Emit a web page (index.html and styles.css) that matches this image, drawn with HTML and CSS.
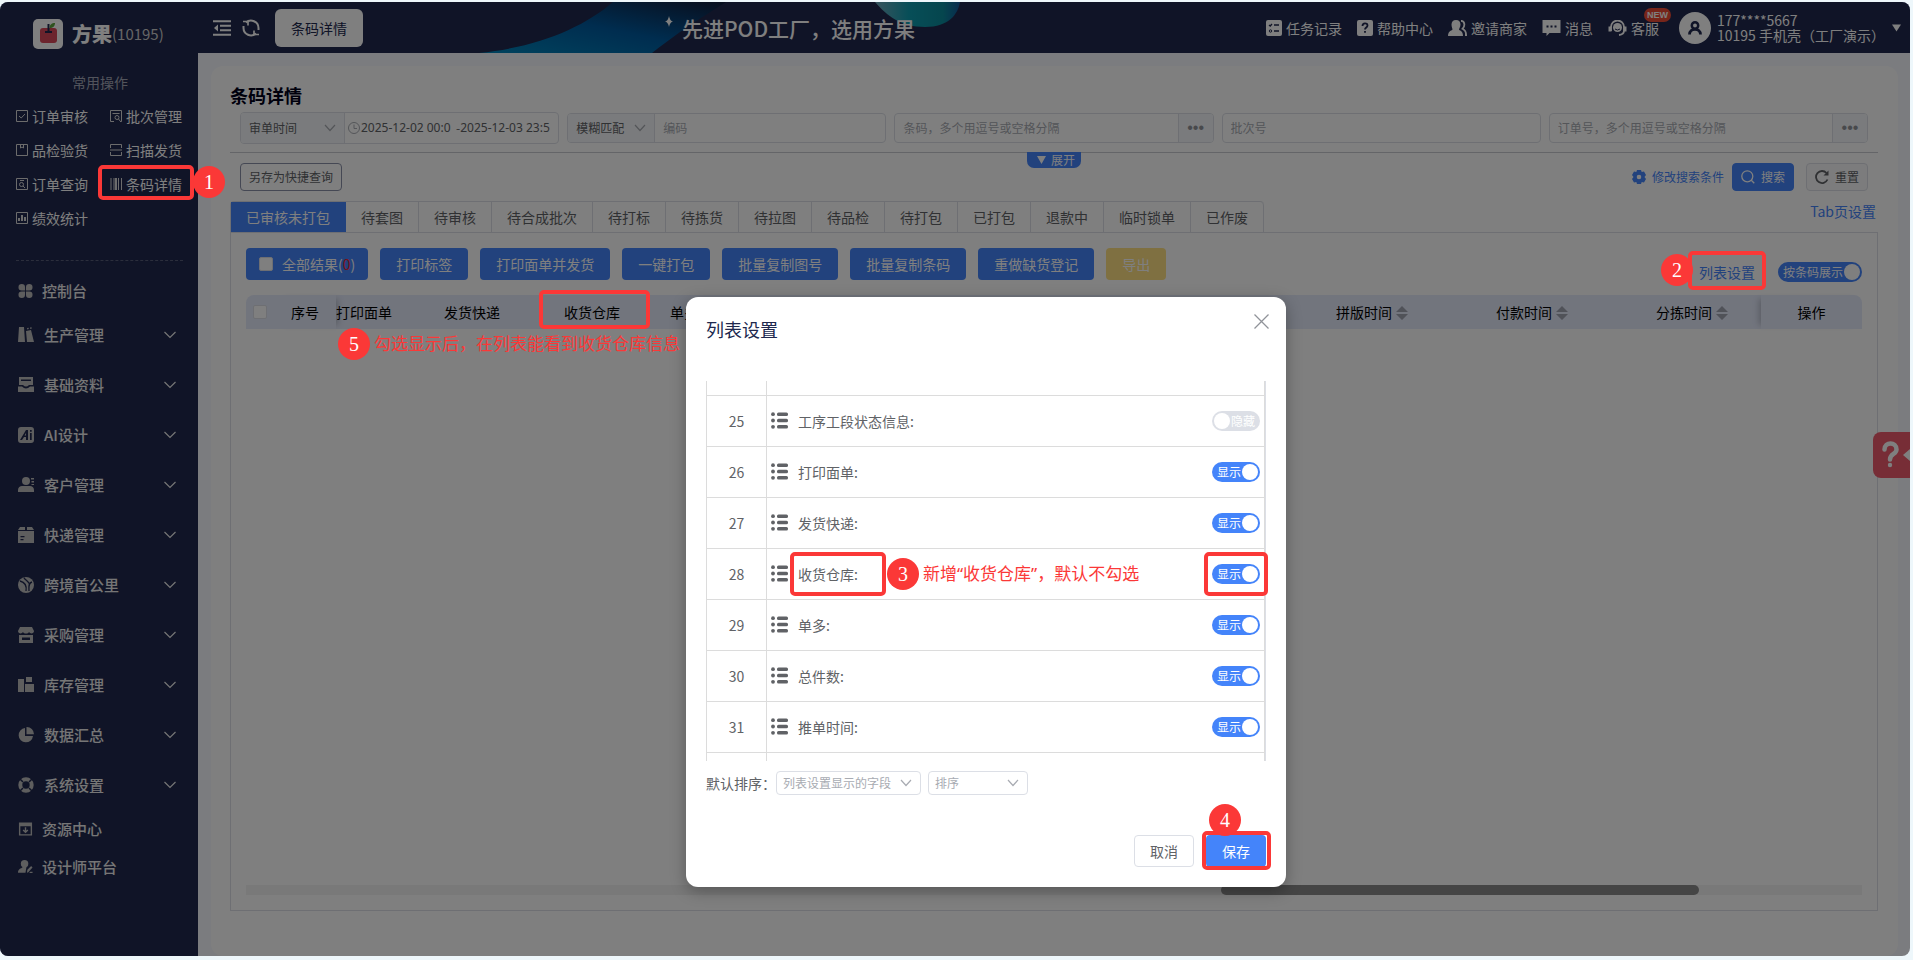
FILE: index.html
```html
<!DOCTYPE html>
<html lang="zh-CN">
<head>
  <meta charset="UTF-8">
  <meta name="viewport" content="width=device-width, initial-scale=1.0">
  <title>条码详情</title>
  <link rel="stylesheet" href="styles.css">
</head>
<body>

<!-- shared icons -->
<svg class="sprite" aria-hidden="true">
  <symbol id="down" viewBox="0 0 12 8"><path d="M0.5 1l5.500 5.500L11.500 1" fill="none" stroke="currentColor" stroke-width="1.2"/></symbol>
  <symbol id="sort" viewBox="0 0 12 14"><path d="M6 0l6 6H0zM6 14l6-6H0z" fill="currentColor"/></symbol>
  <symbol id="rows" viewBox="0 0 17 17"><g fill="currentColor"><circle cx="2" cy="2.200" r="1.900"/><circle cx="2" cy="8.500" r="1.900"/><circle cx="2" cy="14.800" r="1.900"/><rect x="6" y="0.500" width="11" height="3.600" rx="1.500"/><rect x="6" y="6.700" width="11" height="3.600" rx="1.500"/><rect x="6" y="12.900" width="11" height="3.600" rx="1.500"/></g></symbol>
</svg>

<div class="window">
  <aside class="sidebar">
    <div class="brand">
      <svg class="logo" viewBox="0 0 30 30"><rect width="30" height="30" rx="5" fill="#fff"/><rect x="7" y="9" width="17" height="15" rx="3" fill="#d9485a"/><path d="M12 13h7M15.500 13V5" stroke="#20284e" stroke-width="2" fill="none"/><path d="M16.500 9c0-3 2-5 5.500-5 0 3-2 5-5.500 5z" fill="#5da53d"/></svg>
      <strong>方果</strong><span>(10195)</span>
    </div>
    <h2 class="quick-title">常用操作</h2>
    <nav class="quick">
      <a href="#"><svg viewBox="0 0 12 12"><path d="M.5.5h11v11H.5zM3 6l2.200 2L9 4" /></svg>订单审核</a>
      <a href="#"><svg viewBox="0 0 12 12"><path d="M4 11.500H.5V.5h11v11H10M2.500 3.500h7"/><circle cx="7" cy="7.500" r="2"/><path d="M8.500 9l2 2.500"/></svg>批次管理</a>
      <a href="#"><svg viewBox="0 0 12 12"><path d="M.5.5h11v11H.5zM4.500.5V4L6 3l1.500 1V.5"/></svg>品检验货</a>
      <a href="#"><svg viewBox="0 0 12 12"><path d="M.5 4V.5h11V4M.5 8v3.500h11V8M0 6h12"/></svg>扫描发货</a>
      <a href="#"><svg viewBox="0 0 12 12"><path d="M.5.5h11v11H.5zM4 2.500h4"/><circle cx="5.500" cy="6.500" r="2"/><path d="M7 8l2 2"/></svg>订单查询</a>
      <a href="#">
        <svg viewBox="0 0 12 12"><path d="M1 0v12M4 0v12M8.500 0v12M11.500 0v12"/><path d="M6 0v12" stroke-width="2"/></svg>条码详情
        <i class="mark mark-1"></i><b class="step step-1">1</b>
      </a>
      <a href="#"><svg viewBox="0 0 12 12"><path d="M.5.5h11v11H.5z"/><path d="M3 9V6M6 9V3M9 9V5" stroke-width="2"/></svg>绩效统计</a>
    </nav>
    <hr>
    <nav class="menu">
      <a href="#" class="single"><svg viewBox="0 0 16 16"><path d="M4 .5A3.500 3.500 0 0 1 7.500 4v3.500H4A3.500 3.500 0 0 1 4 .5zM12 .5A3.500 3.500 0 0 0 8.500 4v3.500H12A3.500 3.500 0 0 0 12 .5zM4 15.500A3.500 3.500 0 0 0 7.500 12V8.500H4a3.500 3.500 0 0 0 0 7zM12 15.500A3.500 3.500 0 0 1 8.500 12V8.500H12a3.500 3.500 0 0 1 0 7z"/></svg>控制台</a>
      <a href="#"><svg viewBox="0 0 16 16"><path d="M1 0h5l1 15H0zM8 4l5-1 3 12H9zM9 1l1.500-.3.3 1.300-1.500.4zM12 .5l1.500-.3.3 1.300-1.500.4z"/></svg>生产管理<svg class="down"><use href="#down"/></svg></a>
      <a href="#"><svg viewBox="0 0 16 16"><path fill-rule="evenodd" d="M1 0h14v8h-4q-3 3-6 0H1zM3 2.500V4h10V2.500zM0 9.500h4q4 4 8 0h4V15H0z"/></svg>基础资料<svg class="down"><use href="#down"/></svg></a>
      <a href="#"><svg viewBox="0 0 16 16"><path fill-rule="evenodd" d="M3 0h10a3 3 0 0 1 3 3v10a3 3 0 0 1-3 3H3a3 3 0 0 1-3-3V3a3 3 0 0 1 3-3zM8 3l-6 10h2l2-3h2v3h2V3zM8 6v2.500H6.500zM12 3v1.700h1.700V3zM12 6v7h1.700V6z"/></svg>AI设计<svg class="down"><use href="#down"/></svg></a>
      <a href="#"><svg viewBox="0 0 16 16"><circle cx="8" cy="4" r="4"/><path d="M0 15v-2c0-2.500 2-4 4-4h8c2 0 4 1.500 4 4v2zM13 1h3v1.500h-3zM13.500 4H16v1.500h-2.500zM13.500 7H16v1h-2.500z"/></svg>客户管理<svg class="down"><use href="#down"/></svg></a>
      <a href="#"><svg viewBox="0 0 16 16"><path fill-rule="evenodd" d="M2 0h5v3H0zM9 0h5l2 3H9zM0 4h16v12H0zM2.500 9v1.200h4V9zM2.500 12v1.200h3V12z"/></svg>快递管理<svg class="down"><use href="#down"/></svg></a>
      <a href="#"><svg viewBox="0 0 16 16"><circle cx="8" cy="8" r="8"/><path d="M2 4c4 1 7 4 6 10M6 .5c0 2 4 3 5 6M14 5c-4 1-3 5-3 9" stroke="#20284e" stroke-width="1.300" fill="none"/></svg>跨境首公里<svg class="down"><use href="#down"/></svg></a>
      <a href="#"><svg viewBox="0 0 16 16"><path fill-rule="evenodd" d="M2 0h12l2 4c0 3-4 3-5 1-1 2-5 2-6 0-1 2-5 2-5-1zM1 8h14v8H1zM4 10.500V13h8v-2.500z"/></svg>采购管理<svg class="down"><use href="#down"/></svg></a>
      <a href="#"><svg viewBox="0 0 16 16"><path d="M0 2h6v13H0zM8 0h6v5H8zM7 7h9v8H7z"/></svg>库存管理<svg class="down"><use href="#down"/></svg></a>
      <a href="#"><svg viewBox="0 0 16 16"><path d="M7 1v8h8A7.200 7.200 0 1 1 7 1z"/><path d="M8.500 0A7.300 7.300 0 0 1 16 7.300H8.500z"/></svg>数据汇总<svg class="down"><use href="#down"/></svg></a>
      <a href="#"><svg viewBox="0 0 16 16"><circle cx="8" cy="8" r="5.700" fill="none" stroke="currentColor" stroke-width="4"/><path d="M2 2l3 3M14 2l-3 3M2 14l3-3M14 14l-3-3" stroke="#20284e" stroke-width="1.500"/></svg>系统设置<svg class="down"><use href="#down"/></svg></a>
      <a href="#" class="single"><svg viewBox="0 0 16 16"><path fill-rule="evenodd" d="M1 1h14v14H1zM2.500 5v8.500h11V5z"/><path d="M8 6v5M5.500 9L8 11.500 10.500 9" fill="none" stroke="currentColor" stroke-width="1.500"/></svg>资源中心</a>
      <a href="#" class="single"><svg viewBox="0 0 16 16"><circle cx="7" cy="4.500" r="4"/><path d="M0 14c0-4 3-4 5-6h4l-1 6zM9.500 14l.5-3 4-4 1.500 1.500-4.500 5zM13 13h2.500v1.500H12z"/></svg>设计师平台</a>
    </nav>
  </aside>

  <div class="main">
    <header class="topbar">
      <svg class="banner" viewBox="0 0 500 51" aria-hidden="true">
        <defs>
          <linearGradient id="wave" x1="0" y1="1" x2="1" y2="0"><stop offset="0" stop-color="#0087bd"/><stop offset=".5" stop-color="#005a9f"/><stop offset="1" stop-color="#101c3a"/></linearGradient>
          <linearGradient id="drop"><stop offset="0" stop-color="#6fa9bd"/><stop offset=".4" stop-color="#0e9db0"/><stop offset=".8" stop-color="#0b8c9c"/><stop offset="1" stop-color="#0f579d"/></linearGradient>
        </defs>
        <path d="M0 51C60 45 105 25 134 0H247C232 10 210 22 173 51z" fill="url(#wave)"/>
        <path d="M396 0C408 14 422 25 446 25C470 25 479 12 481 0z" fill="url(#drop)"/>
        <path d="M190 14q1 5 4 5.500-3 .5-4 5.500-1-5-4-5.500 3-.5 4-5.500z" fill="#fff"/>
      </svg>
      <button class="icon-btn" aria-label="折叠菜单"><svg viewBox="0 0 18 16"><path d="M0 1.200h18M7 5.700h11M7 10.300h11M0 14.800h18" stroke="currentColor" stroke-width="2"/><path d="M5 4.500v7L1 8z" fill="currentColor"/></svg></button>
      <button class="icon-btn" aria-label="刷新"><svg viewBox="0 0 18 18" fill="none" stroke="currentColor" stroke-width="2"><path d="M4 3.500A7.500 7.500 0 0 1 16.500 9v2M14 14.500A7.500 7.500 0 0 1 1.500 9V7"/><path d="M1 2.500h5v4M17 15.500h-5v-4" stroke-width="1.700"/></svg></button>
      <button class="page-tab">条码详情</button>
      <span class="slogan">先进POD工厂，选用方果</span>
      <nav class="tools">
        <a href="#"><svg viewBox="0 0 16 16"><rect width="16" height="16" rx="2" fill="currentColor"/><path d="M3 5l1.200 1L6 4M8 5h5M8 11h5" stroke="#20284e" stroke-width="1.300" fill="none"/><circle cx="4.500" cy="11" r="1.200" fill="none" stroke="#20284e"/></svg>任务记录</a>
        <a href="#"><svg viewBox="0 0 16 16"><rect width="16" height="16" rx="2" fill="currentColor"/><path d="M5.500 6c0-3.500 5-3.500 5-.5 0 2-2.500 2-2.500 4M8 11v1.800" stroke="#20284e" stroke-width="1.800" fill="none"/></svg>帮助中心</a>
        <a href="#"><svg class="wide" viewBox="0 0 19 16"><path d="M8 0c3 0 4.500 2 4.500 4.500S11 8.500 11 9.500s4 1 4 6.500H0c0-5.500 4.500-5.500 4.500-6.500S3.500 7 3.500 4.500 5 0 8 0z" fill="currentColor"/><path d="M13 .8c4 .2 4.300 5.200 1.500 8 2.500 1.200 3.600 2.500 3.600 6.200H17" fill="none" stroke="currentColor" stroke-width="1.800"/></svg>邀请商家</a>
        <a href="#"><svg class="wide" viewBox="1 0 18 16"><path d="M1 0h18v13H8l-3 3v-3H1z" fill="currentColor"/><path d="M5 6.500h2M9 6.500h2M13 6.500h2" stroke="#20284e" stroke-width="2"/></svg>消息</a>
        <a href="#"><svg class="wide" viewBox="1 0 18 16"><path d="M3.500 11V7a6.500 6.500 0 0 1 13 0v3.500q0 4-5 4.500" fill="none" stroke="currentColor" stroke-width="1.800"/><circle cx="10" cy="7.500" r="4.500" fill="currentColor"/><path d="M1 6.500h3v5H1zM16 6.500h3v5h-3z" fill="currentColor"/><path d="M7.500 9q2.500 2 5 0" stroke="#20284e" fill="none"/></svg>客服<em class="new">NEW</em></a>
      </nav>
      <div class="user">
        <svg class="avatar" viewBox="0 0 32 32"><circle cx="16" cy="16" r="16" fill="#fff"/><circle cx="16" cy="13.500" r="3.200" fill="none" stroke="#20284e" stroke-width="2.500"/><path d="M10.500 22.500c0-7 11-7 11 0" fill="none" stroke="#20284e" stroke-width="2.800"/></svg>
        <p>177****5667<br>10195 手机壳（工厂演示）</p>
        <svg class="caret" viewBox="0 0 10 8"><path d="M0 0h10L5 8z" fill="#fff"/></svg>
      </div>
    </header>

    <main class="card">
      <h1>条码详情</h1>
      <form class="filters">
        <div class="field tall">
          <select class="w-time" aria-label="时间类型"><option>审单时间</option></select>
          <div class="range">
            <svg viewBox="0 0 12 12"><circle cx="6" cy="6" r="5.500"/><path d="M6 2.500V6.500h3"/></svg>
            <input type="text" value="2025-12-02 00:0" aria-label="开始时间">-<input type="text" value="2025-12-03 23:5" aria-label="结束时间">
          </div>
        </div>
        <div class="field">
          <select class="w-match" aria-label="匹配方式"><option>模糊匹配</option></select>
          <input type="text" placeholder="编码" aria-label="编码">
        </div>
        <div class="field">
          <input type="text" placeholder="条码，多个用逗号或空格分隔" aria-label="条码">
          <button type="button" class="more" aria-label="批量输入条码">•••</button>
        </div>
        <div class="field"><input type="text" placeholder="批次号" aria-label="批次号"></div>
        <div class="field">
          <input type="text" placeholder="订单号，多个用逗号或空格分隔" aria-label="订单号">
          <button type="button" class="more" aria-label="批量输入订单号">•••</button>
        </div>
      </form>
      <div class="divider"><button class="expand"><svg viewBox="0 0 9 8"><path d="M0 0h9L4.500 8z" fill="#fff"/></svg>展开</button></div>
      <div class="actions">
        <button class="small plain">另存为快捷查询</button>
        <a href="#" class="edit"><svg viewBox="0 0 14 14"><path fill-rule="evenodd" d="M5 0h4l.7 2 2.300-.4 2 3.400-1.500 2L14 9l-2 3.400-2.300-.4L9 14H5l-.7-2-2.300.4L0 9l1.500-2L0 5l2-3.400 2.300.4zM7 4.700a2.300 2.300 0 1 0 0 4.600 2.300 2.300 0 0 0 0-4.600z" fill="currentColor"/></svg>修改搜索条件</a>
        <button class="small search"><svg viewBox="0 0 14 14" fill="none" stroke="currentColor" stroke-width="1.300"><circle cx="6.300" cy="6.300" r="5.500"/><path d="M10.300 10.300l3 3"/></svg>搜索</button>
        <button class="small reset"><svg viewBox="0 0 14 14"><path d="M12.500 9.500A6 6 0 1 1 11.500 3" fill="none" stroke="currentColor" stroke-width="1.800"/><path d="M13.500.5v5h-5z" fill="currentColor"/></svg>重置</button>
      </div>

      <div class="tab-row">
        <div class="tabs">
          <button class="active">已审核未打包</button><button>待套图</button><button>待审核</button><button>待合成批次</button><button>待打标</button><button>待拣货</button><button>待拉图</button><button>待品检</button><button>待打包</button><button>已打包</button><button>退款中</button><button>临时锁单</button><button>已作废</button>
        </div>
        <a href="#">Tab页设置</a>
      </div>

      <section class="panel">
        <div class="toolbar">
          <label class="btn all"><input type="checkbox">全部结果(<b>0</b>)</label>
          <button class="btn">打印标签</button>
          <button class="btn">打印面单并发货</button>
          <button class="btn">一键打包</button>
          <button class="btn">批量复制图号</button>
          <button class="btn">批量复制条码</button>
          <button class="btn">重做缺货登记</button>
          <button class="btn export" disabled>导出</button>
          <a href="#" class="list-set">列表设置<i class="mark mark-2"></i><b class="step step-2">2</b></a>
          <label class="switch long"><input type="checkbox" checked><span>按条码展示</span></label>
        </div>
        <table class="grid">
          <thead>
            <tr>
              <th class="c-check"><input type="checkbox" aria-label="全选"></th>
              <th class="c-no">序号</th>
              <th class="c-print">打印面单</th>
              <th class="c-std">发货快递</th>
              <th class="c-std marked">收货仓库
                <i class="mark mark-5"></i>
                <span class="note note-5"><b>5</b>勾选显示后，在列表能看到收货仓库信息</span>
              </th>
              <th class="c-many">单多</th>
              <th></th>
              <th class="c-time">拼版时间<svg class="sort"><use href="#sort"/></svg></th>
              <th class="c-time">付款时间<svg class="sort"><use href="#sort"/></svg></th>
              <th class="c-last">分拣时间<svg class="sort"><use href="#sort"/></svg></th>
              <th class="c-op">操作</th>
            </tr>
          </thead>
        </table>
        <div class="hscroll"><span></span></div>
      </section>
    </main>
  </div>

  <button class="help" aria-label="帮助"><svg viewBox="0 0 37 46"><path d="M11.500 17.500c0-8 12-8 12 0 0 5-6.500 4-6.500 10" fill="none" stroke="#fff" stroke-width="4.500" stroke-linecap="round"/><circle cx="17" cy="33" r="2.200" fill="#fff"/><path d="M37 17v12l-7-6z" fill="#fff"/></svg></button>

  <div class="shade"></div>

  <div class="dialog" role="dialog" aria-labelledby="dlg-title">
    <div class="dlg-head">
      <h2 id="dlg-title">列表设置</h2>
      <button class="close" aria-label="关闭"><svg viewBox="0 0 15 15"><path d="M.5.5l14 14M14.500.5l-14 14" stroke="currentColor" stroke-width="1.300"/></svg></button>
    </div>
    <div class="dlg-list">
      <table>
        <tbody>
          <tr class="cut"><td></td><td></td></tr>
          <tr><td>25</td><td><div class="item"><svg><use href="#rows"/></svg><span>工序工段状态信息:</span><label class="switch off"><input type="checkbox"><span>隐藏</span></label></div></td></tr>
          <tr><td>26</td><td><div class="item"><svg><use href="#rows"/></svg><span>打印面单:</span><label class="switch"><input type="checkbox" checked><span>显示</span></label></div></td></tr>
          <tr><td>27</td><td><div class="item"><svg><use href="#rows"/></svg><span>发货快递:</span><label class="switch"><input type="checkbox" checked><span>显示</span></label></div></td></tr>
          <tr><td>28</td><td><div class="item"><svg><use href="#rows"/></svg><span class="marked">收货仓库:<i class="mark mark-3"></i><span class="note note-3"><b>3</b>新增“收货仓库”，默认不勾选</span></span><label class="switch"><input type="checkbox" checked><span>显示</span><i class="mark mark-3b"></i></label></div></td></tr>
          <tr><td>29</td><td><div class="item"><svg><use href="#rows"/></svg><span>单多:</span><label class="switch"><input type="checkbox" checked><span>显示</span></label></div></td></tr>
          <tr><td>30</td><td><div class="item"><svg><use href="#rows"/></svg><span>总件数:</span><label class="switch"><input type="checkbox" checked><span>显示</span></label></div></td></tr>
          <tr><td>31</td><td><div class="item"><svg><use href="#rows"/></svg><span>推单时间:</span><label class="switch"><input type="checkbox" checked><span>显示</span></label></div></td></tr>
          <tr class="cut"><td></td><td></td></tr>
        </tbody>
      </table>
    </div>
    <div class="dlg-sort">
      <label for="sort-field">默认排序：</label>
      <select id="sort-field"><option>列表设置显示的字段</option></select>
      <select class="order" aria-label="排序"><option>排序</option></select>
    </div>
    <div class="dlg-foot">
      <button class="btn cancel">取消</button>
      <button class="btn save">保存<i class="mark mark-4"></i><b class="step step-4">4</b></button>
    </div>
  </div>
</div>

</body>
</html>
```

FILE: styles.css
```css
*{
  box-sizing:border-box;
}
body{
  margin:0;
  padding:2px 3px 4px 0;
  background-color:#eef7fb;
  font:14px/20px "Noto Sans CJK SC",sans-serif;
  color:#606266;
}
h1,h2,p{
  margin:0;
  font-weight:400;
}
a{
  color:#4484fa;
  text-decoration:none;
}
button,input,select{
  font:inherit;
  color:inherit;
}
button{
  padding:0;
  border:0;
  background:none;
  cursor:pointer;
}
svg{
  flex:none;
}
.sprite{
  position:absolute;
  width:0;
  height:0;
}
.window{
  position:relative;
  display:flex;
  min-height:calc(100vh - 6px);
  border-radius:8px;
  overflow:hidden;
}

/* sidebar */
.sidebar{
  flex:none;
  width:198px;
  background-color:#20284e;
  color:#fff;
}
.sidebar a{
  color:#fff;
}
.brand{
  display:flex;
  align-items:center;
  height:63px;
  padding-left:33px;
  font-size:15px;
}
.brand span{
  color:#ccc;
}
.brand strong{
  margin-left:9px;
  font-size:20px;
  font-weight:900;
}
.logo{
  width:30px;
  height:30px;
}
.quick-title{
  margin:7px 0;
  padding-left:72px;
  font-size:14px;
  color:#a5a9b8;
}
.quick{
  display:grid;
  grid-template-columns:94px 94px;
  grid-auto-rows:34px;
  padding-left:16px;
  align-items:center;
  justify-items:start;
}
.quick a{
  position:relative;
  display:flex;
  align-items:center;
  gap:4px;
}
.quick svg{
  width:12px;
  height:12px;
  fill:none;
  stroke:#d8d8d8;
}
.sidebar hr{
  margin:25px 15px 11px 16px;
  border:0;
  border-top:1px dashed #565c78;
}
.menu a{
  display:flex;
  align-items:center;
  gap:10px;
  height:50px;
  padding:0 22px 0 18px;
  font-size:15px;
  font-weight:500;
  color:#ececec;
}
.menu a.single{
  height:38px;
  gap:9px;
}
.menu svg{
  width:16px;
  height:16px;
  fill:#bcbcbc;
  color:#bcbcbc;
}
.menu .single svg{
  width:15px;
}
.menu .down{
  width:12px;
  height:8px;
  margin-left:auto;
  color:#ececec;
}

/* top bar */
.main{
  flex:1;
  display:flex;
  flex-direction:column;
  min-width:0;
  background-color:#f6f8fe;
}
.topbar{
  position:relative;
  display:flex;
  align-items:center;
  height:51px;
  padding:0 9px 0 15px;
  background-color:#20284e;
  color:#fff;
}
.banner{
  position:absolute;
  left:281px;
  top:0;
  width:500px;
  height:51px;
}
.icon-btn{
  width:18px;
  height:18px;
  margin-right:11px;
}
.icon-btn svg{
  display:block;
  width:18px;
  height:18px;
}
.page-tab{
  height:38px;
  padding:0 16px;
  margin-left:4px;
  border-radius:6px;
  background-color:#fff;
  color:#20284e;
}
.slogan{
  position:relative;
  margin-left:319px;
  font-size:21px;
  font-weight:500;
}
.tools{
  display:flex;
  gap:15px;
  margin-left:auto;
}
.tools a{
  position:relative;
  display:flex;
  align-items:center;
  gap:4px;
  color:#fff;
}
.tools svg{
  width:16px;
  height:16px;
}
.tools .wide{
  width:19px;
}
.new{
  position:absolute;
  left:36px;
  top:-10px;
  padding:0 3px;
  border-radius:7px;
  background-color:#ee4a35;
  font:bold 9px/14px "Liberation Sans",sans-serif;
}
.user{
  display:flex;
  align-items:center;
  margin-left:20px;
  line-height:15px;
}
.avatar{
  width:32px;
  height:32px;
  margin-right:6px;
}
.caret{
  width:9px;
  height:8px;
  margin-left:7px;
}

/* search area */
.card{
  flex:1;
  display:flex;
  flex-direction:column;
  margin:13px 12px 0 13px;
  padding:17px 20px 45px 19px;
  border-radius:12px;
  background-color:#fff;
}
h1{
  font-size:18px;
  line-height:24px;
  font-weight:700;
  color:#000019;
}
.filters{
  display:grid;
  grid-template-columns:repeat(5,minmax(0,1fr));
  gap:8px;
  align-items:center;
  padding:5px 10px 8px;
  font-size:12px;
}
.field{
  display:flex;
  height:30px;
  border:1px solid #dcdfe6;
  border-radius:4px;
  overflow:hidden;
}
.field.tall{
  height:32px;
}
.field input{
  flex:1;
  min-width:0;
  padding:0 8px;
  border:0;
  background:none;
}
input::placeholder{
  color:#a8abb2;
}
select{
  appearance:none;
  border:0;
  background:url("data:image/svg+xml,%3Csvg xmlns='http://www.w3.org/2000/svg' viewBox='0 0 12 8'%3E%3Cpath d='M1 1l5 5.500L11 1' fill='none' stroke='%23a8abb2' stroke-width='1.200'/%3E%3C/svg%3E") no-repeat right 8px center/12px 8px;
}
.field select{
  padding:0 8px;
  background-color:#f5f7fa;
  border-right:1px solid #dcdfe6;
}
.w-time{
  width:104px;
}
.w-match{
  width:87px;
}
.range{
  flex:1;
  display:flex;
  align-items:center;
  min-width:0;
  padding:0 3px;
}
.range svg{
  width:12px;
  height:12px;
  margin-right:1px;
  fill:none;
  stroke:#a8abb2;
}
.range input{
  padding:0;
  font-family:"Noto Sans",sans-serif;
}
.more{
  width:35px;
  border-left:1px solid #dcdfe6;
  background-color:#f5f7fa;
  color:#909399;
  font:16px/20px "Liberation Sans",sans-serif;
}
.divider{
  position:relative;
  border-top:1px solid #c8cad0;
}
.expand{
  position:absolute;
  left:797px;
  top:-1px;
  display:flex;
  align-items:center;
  gap:5px;
  padding:0 6px 0 10px;
  border-radius:0 0 7px 7px;
  background-color:#4484fa;
  color:#fff;
  font-size:12px;
  line-height:16px;
}
.expand svg{
  width:9px;
  height:8px;
}
.actions{
  display:flex;
  align-items:center;
  padding:10px;
  font-size:12px;
}
.small{
  display:flex;
  align-items:center;
  gap:6px;
  height:28px;
  padding:0 8px;
  border:1px solid #dcdfe6;
  border-radius:4px;
}
.small svg,.edit svg{
  width:14px;
  height:14px;
}
.plain{
  border-color:#8a90a8;
}
.edit{
  display:flex;
  align-items:center;
  gap:6px;
  margin:0 8px 0 auto;
}
.search{
  margin-right:12px;
  border-color:#4484fa;
  background-color:#4484fa;
  color:#fff;
}
.reset{
  background-color:#f9f9fb;
}

/* tabs */
.tab-row{
  display:flex;
  justify-content:space-between;
  align-items:flex-start;
  padding-right:2px;
}
.tabs{
  display:flex;
  border:1px solid #dcdfe6;
  border-width:1px 0 0 1px;
  border-radius:4px 4px 0 0;
}
.tabs button{
  height:30px;
  padding:0 15px;
  border-right:1px solid #dcdfe6;
}
.tabs button:last-child{
  border-radius:0 4px 0 0;
}
.tabs .active{
  border-color:#4484fa;
  background-color:#4484fa;
  color:#fff;
}

/* results */
.panel{
  flex:1;
  display:flex;
  flex-direction:column;
  padding:15px;
  border:1px solid #dcdfe6;
}
.toolbar{
  display:flex;
  align-items:flex-start;
  gap:12px;
  margin-bottom:13px;
}
.btn{
  height:32px;
  padding:0 16px;
  border-radius:4px;
  background-color:#4484fa;
  color:#fff;
  white-space:nowrap;
}
.all{
  display:flex;
  align-items:center;
  padding:0 13px;
}
.all b{
  font-weight:400;
  color:#f02030;
}
.toolbar input[type=checkbox],.c-check input{
  appearance:none;
  width:14px;
  height:14px;
  margin:0;
  border:1px solid #dcdfe6;
  border-radius:2px;
  background-color:#fff;
}
.all input[type=checkbox]{
  margin-right:9px;
}
.export{
  background-color:#ffe082;
}
.list-set{
  position:relative;
  margin:14px 11px 0 auto;
}
.toolbar .switch{
  margin-top:14px;
}
.switch{
  position:relative;
  display:flex;
  flex:none;
  align-items:center;
  width:48px;
  height:20px;
  padding-left:5px;
  font-size:12px;
  color:#fff;
}
.long{
  width:84px;
}
.switch input[type=checkbox]{
  appearance:none;
  position:absolute;
  inset:0;
  width:100%;
  height:20px;
  margin:0;
  border:0;
  border-radius:10px;
  background-color:#dcdfe6;
}
.switch input[type=checkbox]:checked{
  background-color:#4484fa;
}
.switch span{
  position:relative;
}
.switch::after{
  content:"";
  position:absolute;
  right:2px;
  top:2px;
  width:16px;
  height:16px;
  border-radius:50%;
  background-color:#fff;
}
.switch.off{
  padding-left:19px;
}
.switch.off::after{
  left:2px;
}
.grid{
  width:100%;
  table-layout:fixed;
  border-collapse:collapse;
  border-radius:8px 8px 0 0;
  background-color:#e4eafb;
  color:#000;
}
.grid th{
  height:34px;
  padding:0;
  font-weight:400;
  white-space:nowrap;
}
.grid .marked{
  position:relative;
}
.c-check{
  width:28px;
}
.c-check input{
  display:block;
  margin:0 auto;
}
.c-no{
  width:62px;
  box-shadow:6px 0 6px -4px #b4bac8;
}
.grid .c-print{
  width:76px;
  text-align:left;
}
.c-std{
  width:120px;
}
.c-many{
  width:64px;
}
.c-time{
  width:160px;
}
.grid .c-last{
  width:149px;
  padding-left:11px;
}
.c-op{
  width:101px;
  box-shadow:-6px 0 6px -4px #b4bac8;
}
.sort{
  width:12px;
  height:14px;
  margin-left:4px;
  vertical-align:-2px;
  color:#a0a4b0;
}
.hscroll{
  margin-top:auto;
  background-color:#f3f3f3;
}
.hscroll span{
  display:block;
  width:478px;
  height:10px;
  margin-left:975px;
  border-radius:5px;
  background-color:#8b8b8b;
}
.help{
  position:absolute;
  right:0;
  top:430px;
  width:37px;
  height:46px;
  border-radius:8px 0 0 8px;
  background-color:#ee5a6c;
}
.help svg{
  display:block;
}

/* dialog */
.shade{
  position:absolute;
  inset:0;
  z-index:10;
  background-color:rgba(0,0,0,.5);
}
.dialog{
  position:absolute;
  left:686px;
  top:295px;
  z-index:11;
  width:600px;
  padding:20px 20px;
  border-radius:12px;
  background-color:#fff;
  box-shadow:0 4px 16px rgba(0,0,0,.3);
}
.dlg-head{
  display:flex;
  justify-content:space-between;
  align-items:flex-start;
  height:64px;
}
.dlg-head h2{
  font-size:18px;
  line-height:24px;
  color:#20284e;
}
.close{
  width:15px;
  height:15px;
  margin:-3px -3px 0 0;
  color:#909399;
}
.close svg{
  display:block;
}
.dlg-list{
  border-right:1px solid #dcdfe6;
}
.dlg-list table{
  width:100%;
  border-collapse:collapse;
}
.dlg-list td{
  height:51px;
  padding:0;
  border:1px solid #dcdcdc;
}
.dlg-list td:first-child{
  width:60px;
  text-align:center;
}
.dlg-list tr:first-child td{
  height:14px;
  border-top:0;
}
.dlg-list tr:last-child td{
  height:9px;
  border-bottom:0;
}
.item{
  display:flex;
  align-items:center;
  padding:0 4px;
}
.item svg{
  width:17px;
  height:17px;
  margin-right:10px;
}
.item .switch{
  margin-left:auto;
}
.item .marked{
  position:relative;
}
.dlg-sort{
  display:flex;
  align-items:center;
  gap:7px;
  margin-top:10px;
}
.dlg-sort label{
  width:63px;
  white-space:nowrap;
}
.dlg-sort select{
  width:145px;
  height:24px;
  padding:0 6px;
  border:1px solid #dcdfe6;
  border-radius:4px;
  font-size:12px;
  line-height:20px;
  color:#a8abb2;
}
.dlg-sort .order{
  width:100px;
}
.dlg-foot{
  display:flex;
  justify-content:flex-end;
  gap:12px;
  margin-top:40px;
}
.cancel{
  padding:0 15px;
  border:1px solid #dcdfe6;
  background-color:#fff;
  color:#606266;
}
.save{
  position:relative;
}

/* numbered guide marks */
.mark{
  position:absolute;
  z-index:20;
  border:4px solid #fb3837;
  border-radius:5px;
}
.step,.note{
  position:absolute;
  z-index:20;
}
.step,.note b{
  width:32px;
  height:32px;
  border-radius:50%;
  background-color:#fb3837;
  color:#fff;
  font:20px/32px "Liberation Serif",serif;
  text-align:center;
}
.note{
  display:flex;
  align-items:center;
  gap:4px;
  font-family:"Noto Sans","Noto Sans CJK SC",sans-serif;
  font-size:17px;
  color:#fb3837;
  white-space:nowrap;
}
.mark-1{
  inset:-9px -12px -6px;
}
.step-1{
  left:83px;
  top:-8px;
}
.mark-2{
  inset:-11px -11px -8px;
}
.step-2{
  left:-38px;
  top:-8px;
}
.mark-3{
  inset:-12px -28px -12px -8px;
}
.note-3{
  left:89px;
  top:-6px;
}
.mark-3b{
  inset:-12px -8px;
}
.mark-4{
  inset:-4px -5px -3px -4px;
}
.step-4{
  left:3px;
  top:-31px;
}
.mark-5{
  inset:-5px 2px 0 7px;
}
.note-5{
  left:-194px;
  top:33px;
}
```
